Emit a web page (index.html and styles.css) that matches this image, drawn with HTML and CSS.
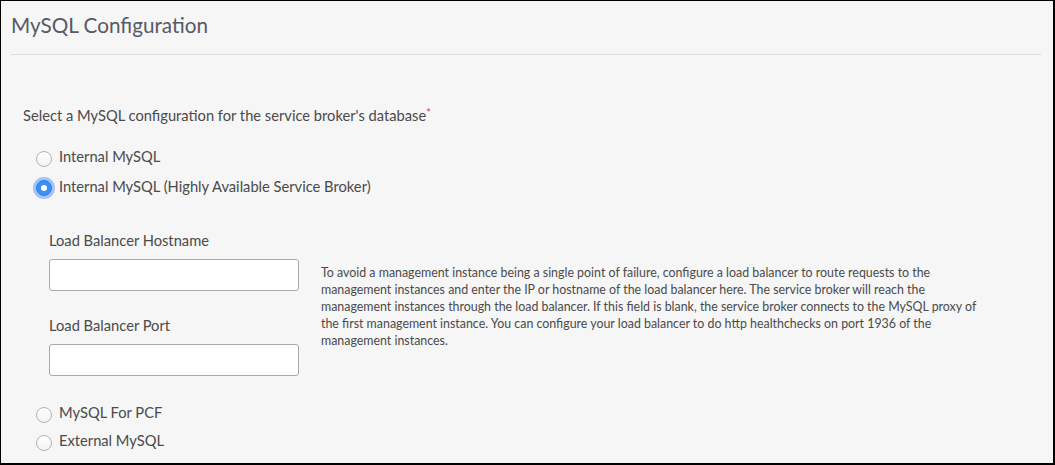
FILE: index.html
```html
<!DOCTYPE html>
<html>
<head>
<meta charset="utf-8">
<link rel="stylesheet" href="styles.css">
</head>
<body>
<div class="panel">
  <div class="header">
    <h1 class="title">MySQL Configuration</h1>
  </div>
  <div class="content">
    <div class="question">Select a MySQL configuration for the service broker's database<span class="req">*</span></div>
    <div class="options">
      <div class="option"><span class="radio"></span><span class="opt-label">Internal MySQL</span></div>
      <div class="option"><span class="radio checked"></span><span class="opt-label">Internal MySQL (Highly Available Service Broker)</span></div>
      <div class="sub">
        <div class="fields">
          <div class="field-label">Load Balancer Hostname</div>
          <div class="input"></div>
          <div class="field-label second">Load Balancer Port</div>
          <div class="input"></div>
        </div>
        <p class="help">To avoid a management instance being a single point of failure, configure a load balancer to route requests to the management instances and enter the IP or hostname of the load balancer here. The service broker will reach the management instances through the load balancer. If this field is blank, the service broker connects to the MySQL proxy of the first management instance. You can configure your load balancer to do http healthchecks on port 1936 of the management instances.</p>
      </div>
      <div class="option lower"><span class="radio"></span><span class="opt-label">MySQL For PCF</span></div>
      <div class="option tight"><span class="radio"></span><span class="opt-label">External MySQL</span></div>
    </div>
  </div>
</div>
</body>
</html>
```

FILE: styles.css
```css
html, body {
  margin: 0;
  padding: 0;
}
body {
  font-family: Lato, "Open Sans", sans-serif;
  color: #4a4a4a;
}
.panel {
  box-sizing: border-box;
  width: 1055px;
  height: 465px;
  border-style: solid;
  border-color: #000;
  border-width: 1px 2px 2px 1px;
  background: #f6f6f6;
  overflow: hidden;
}
.header {
  padding: 0 12px 0 10px;
}
.title {
  margin: 0;
  padding-top: 10px;
  height: 43px;
  font-size: 20.7px;
  line-height: 28px;
  font-weight: 400;
  color: #555a66;
  border-bottom: 1px solid #dcdcdc;
}
.content {
  padding: 50px 0 0 22px;
}
.question {
  font-size: 14.7px;
  line-height: 20px;
  color: #4a4a4a;
}
.req {
  color: #e0403a;
  font-size: 11px;
  vertical-align: top;
  position: relative;
  top: -2px;
}
.options {
  padding-top: 21px;
  padding-left: 13px;
}
.option {
  display: flex;
  align-items: center;
  height: 20px;
  margin-bottom: 10px;
  font-size: 14.7px;
  line-height: 20px;
}
.option.lower {
  margin-top: 26px;
  margin-bottom: 8px;
}
.radio {
  box-sizing: border-box;
  width: 16px;
  height: 16px;
  border-radius: 50%;
  border: 1px solid #b3b3b3;
  background: linear-gradient(#ffffff, #f2f2f2);
  margin-right: 7px;
  position: relative;
  top: 3px;
  flex: none;
}
.radio.checked {
  top: 2px;
  border: 1px solid #2f7ee8;
  background: #3d8ef5;
  box-shadow: 0 0 0 3px rgba(95, 155, 245, 0.55);
}
.radio.checked::after {
  content: "";
  position: absolute;
  left: 4px;
  top: 4px;
  width: 6px;
  height: 6px;
  border-radius: 50%;
  background: #fff;
}
.sub {
  display: flex;
  gap: 22px;
  padding: 24px 0 0 13px;
}
.fields {
  width: 250px;
  flex: none;
}
.field-label {
  font-size: 14.7px;
  line-height: 20px;
  margin-bottom: 9px;
}
.field-label.second {
  margin-top: 24px;
}
.input {
  box-sizing: border-box;
  width: 250px;
  height: 32px;
  background: #fff;
  border: 1px solid #a9a9a9;
  border-radius: 3px;
}
.help {
  margin: 34px 0 0 0;
  width: 675px;
  font-size: 12.4px;
  line-height: 17px;
  color: #4a4a4a;
}
```
